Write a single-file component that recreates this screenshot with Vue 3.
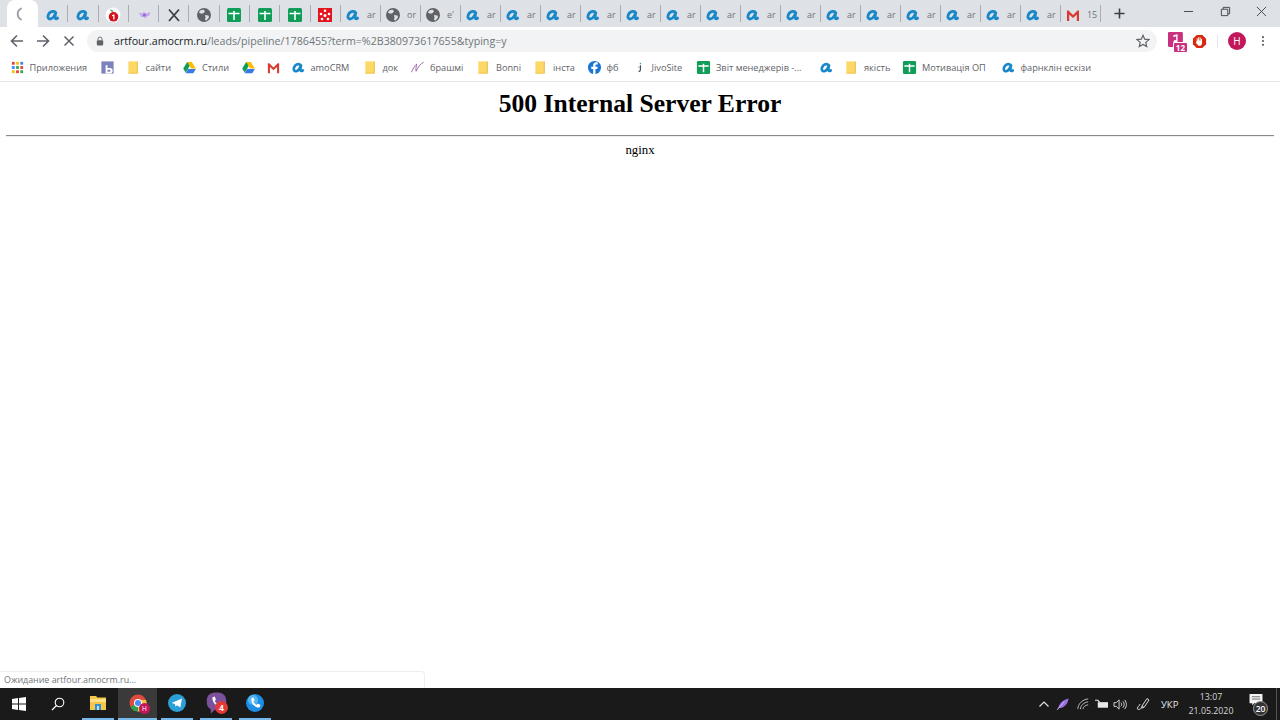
<script setup>
const narrow = ['a', 'a', 'tomato', 'purple', 'x', 'globe', 'sheet', 'sheet', 'sheet', 'dots']
const wide = [
  { icon: 'a', text: 'ar' },
  { icon: 'globe', text: 'or' },
  { icon: 'globe', text: "e'" },
  ...Array.from({ length: 15 }, () => ({ icon: 'a', text: 'ar' })),
  { icon: 'gmail', text: '15' }
]
const bookmarks = [
  { icon: 'apps', text: 'Приложения', w: 90.5 },
  { icon: 'bk', text: '', w: 25.5 },
  { icon: 'folder', text: 'сайти', w: 56.5 },
  { icon: 'drive', text: 'Стили', w: 58.5 },
  { icon: 'drive', text: '', w: 25.5 },
  { icon: 'gmail', text: '', w: 24.5 },
  { icon: 'a', text: 'amoCRM', w: 72 },
  { icon: 'folder', text: 'док', w: 47.5 },
  { icon: 'brush', text: 'брашмі', w: 66 },
  { icon: 'folder', text: 'Bonni', w: 57 },
  { icon: 'folder', text: 'інста', w: 53.5 },
  { icon: 'fb', text: 'фб', w: 45 },
  { icon: 'jivo', text: 'JivoSite', w: 64.5 },
  { icon: 'sheet', text: 'Звіт менеджерів -...', w: 122.5 },
  { icon: 'a', text: '', w: 25.5 },
  { icon: 'folder', text: 'якість', w: 58 },
  { icon: 'sheet', text: 'Мотивація ОП', w: 98.5 },
  { icon: 'a', text: 'фарнклін ескізи', w: 100 }
]
</script>

<template>
  <div class="screen">
    <svg class="defs" aria-hidden="true">
      <symbol id="a" viewBox="0 0 16 16">
        <path d="M10.800 6C10 4.400 7.600 3.900 5.700 5 3.300 6.400 2.300 9.400 3.300 11c1 1.600 3.300 1.100 4.900-.6 1.200-1.300 2-3.400 2.600-5.600-.4 2.200-.9 4.500-.7 6 .2 1.200 1.300 1.300 2.500.3" fill="none" stroke="#1a87c9" stroke-width="2.800" stroke-linecap="round" />
      </symbol>
      <symbol id="globe" viewBox="0 0 16 16">
        <circle cx="8" cy="8" r="7" fill="#5f6368" />
        <path d="M4 3.500 7.500 2.500 9 4.500 7 6.500 4.500 6.500 3 5.500ZM9 8l3.500.5L13 10.500 10.500 13.500 9 13 9.500 10.500Z" fill="#dfe1e5" />
      </symbol>
      <symbol id="sheet" viewBox="0 0 16 16">
        <rect x="1" y="1" width="14" height="14" rx="1.500" fill="#0f9d58" />
        <path d="M7.200 4h1.600v1.700h4.700v1.600H8.800V13H7.200V7.300H2.500V5.700h4.700Z" fill="#fff" />
      </symbol>
      <symbol id="tomato" viewBox="0 0 16 16">
        <circle cx="8" cy="8" r="7.500" fill="#fff" />
        <circle cx="8.500" cy="9.800" r="4.800" fill="#d3121c" />
        <path d="M7 5C6 3.500 5 3 4.500 3 6 2.500 7.500 3 8.500 4.500Z" fill="#3f9b3f" />
        <path d="M8.200 7.500h1.300v5H8.200V8.700l-1.200.5V8.200Z" fill="#fff" />
      </symbol>
      <symbol id="purple" viewBox="0 0 16 16">
        <path d="M2 5.500 6 6.500 8 5l2 1.500 4.500-1.500-1.500 4-2.500.5-1 2-1.500-1.500L5 10 4.500 8Z" fill="#c6a6ec" />
        <circle cx="8.500" cy="8" r="1.600" fill="#8f6bd2" />
      </symbol>
      <symbol id="x" viewBox="0 0 16 16">
        <path d="M3 2.500 13 14M13 2.500 3 14" stroke="#3c4043" stroke-width="1.800" fill="none" />
      </symbol>
      <symbol id="dots" viewBox="0 0 16 16">
        <rect x="1" y="1" width="14" height="14" fill="#e2151f" />
        <g fill="#fff"><circle cx="8" cy="3.800" r="1.300" /><circle cx="4" cy="7" r="1.300" /><circle cx="12" cy="7" r="1.300" /><circle cx="8" cy="8.500" r="1.500" /><circle cx="5" cy="12" r="1.300" /><circle cx="11" cy="12" r="1.300" /></g>
      </symbol>
      <symbol id="gmail" viewBox="0 0 16 16">
        <path d="M2 14V3.500h1.500L8 8l4.500-4.500H14V14h-2.200V7.500L8 11 4.200 7.500V14Z" fill="#d93a30" />
      </symbol>
      <symbol id="apps" viewBox="0 0 16 16">
        <g transform="translate(2 2)">
          <rect x="0" y="0" width="3" height="3" fill="#ea4335" /><rect x="4.500" y="0" width="3" height="3" fill="#fbbc04" /><rect x="9" y="0" width="3" height="3" fill="#4285f4" />
          <rect x="0" y="4.500" width="3" height="3" fill="#4285f4" /><rect x="4.500" y="4.500" width="3" height="3" fill="#34a853" /><rect x="9" y="4.500" width="3" height="3" fill="#ea4335" />
          <rect x="0" y="9" width="3" height="3" fill="#fbbc04" /><rect x="4.500" y="9" width="3" height="3" fill="#ea4335" /><rect x="9" y="9" width="3" height="3" fill="#34a853" />
        </g>
      </symbol>
      <symbol id="bk" viewBox="0 0 16 16">
        <rect x="1.500" y="1.500" width="13" height="13" fill="#7d82bd" />
        <path d="M6 5.500h2v3h2.500a2.800 2.800 0 0 1 0 6H6Zm2 5v2h2.200a1 1 0 0 0 0-2Z" fill="#fff" />
      </symbol>
      <symbol id="folder" viewBox="0 0 16 16">
        <path d="M2.500 1.500h10v13h-10Z" fill="#fdd867" />
        <path d="M11.500 1.500h1v13h-10v-1h9Z" fill="#e9bd4e" />
      </symbol>
      <symbol id="drive" viewBox="0 0 16 16">
        <path d="M5.500 2h5L6.800 8.800 4 13.500 1.300 9Z" fill="#0f9d58" />
        <path d="M5.500 2h5l4.300 7H9.700Z" fill="#fbbc04" />
        <path d="M4 14 6.500 9.500h8.300L12 14Z" fill="#3b78e7" />
      </symbol>
      <symbol id="brush" viewBox="0 0 16 16">
        <path d="M1.500 13C4 8 5.500 5.500 7 4.500 6.500 8 6 10 6.500 12 8.500 7.500 11 4 14.500 2.500" fill="none" stroke="#9a5aa8" stroke-width="1" />
      </symbol>
      <symbol id="fb" viewBox="0 0 16 16">
        <circle cx="8" cy="8" r="7" fill="#1877d2" />
        <path d="M9 15V9.500h2l.4-2.300H9V6c0-.8.3-1.300 1.300-1.300h1.100V2.600C11 2.500 10.400 2.400 9.800 2.400 7.900 2.400 6.600 3.600 6.600 5.700v1.500H4.500v2.300h2.100V15Z" fill="#fff" />
      </symbol>
      <symbol id="jivo" viewBox="0 0 16 16">
        <path d="M9 5.500v5c0 1.200-.7 1.800-2 2" fill="none" stroke="#41505e" stroke-width="1.300" />
        <circle cx="9" cy="3.800" r=".8" fill="#41a95e" />
        <circle cx="7.300" cy="7.500" r=".6" fill="#41505e" />
      </symbol>
    </svg>

    <header class="tabstrip">
      <div class="tab active">
        <svg class="tab-icon" viewBox="0 0 16 16"><path d="M11 2.500A6.200 6.200 0 0 0 11 13.500" fill="none" stroke="#9aa0a6" stroke-width="1.800" stroke-linecap="round" /></svg>
      </div>
      <div v-for="(icon, i) in narrow" :key="'n' + i" class="tab narrow">
        <svg class="tab-icon"><use :href="'#' + icon" /></svg>
      </div>
      <div v-for="(t, i) in wide" :key="'w' + i" class="tab wide">
        <svg class="tab-icon"><use :href="'#' + t.icon" /></svg>
        <span class="tab-text">{{ t.text }}</span>
      </div>
      <svg class="new-tab" viewBox="0 0 12 12"><path d="M6 .5v11M.5 6h11" stroke="#3c4043" stroke-width="1.700" /></svg>
      <div class="window-controls">
        <svg viewBox="0 0 12 12"><path d="M1 6h10" stroke="#3c4043" stroke-width="1" /></svg>
        <svg viewBox="0 0 12 12"><path d="M1.500 3.500h7v7h-7ZM3.500 3.500v-2h7v7h-2" fill="none" stroke="#3c4043" stroke-width="1" /></svg>
        <svg viewBox="0 0 12 12"><path d="M1 1l10 10M11 1 1 11" stroke="#3c4043" stroke-width="1" /></svg>
      </div>
    </header>

    <nav class="toolbar">
      <svg class="nav-icon" viewBox="0 0 14 14"><path d="M13 7H2M7 1.500 1.500 7 7 12.500" fill="none" stroke="#5f6368" stroke-width="1.600" /></svg>
      <svg class="nav-icon" viewBox="0 0 14 14"><path d="M1 7h11M7 1.500 12.500 7 7 12.500" fill="none" stroke="#5f6368" stroke-width="1.600" /></svg>
      <svg class="nav-icon" viewBox="0 0 14 14"><path d="M2.500 2.500l9 9M11.500 2.500l-9 9" fill="none" stroke="#5f6368" stroke-width="1.500" /></svg>
      <div class="omnibox">
        <svg class="lock" viewBox="0 0 10 12"><path d="M2.500 5V3.500a2.500 2.500 0 0 1 5 0V5" fill="none" stroke="#5f6368" stroke-width="1.100" /><rect x="1" y="5" width="8" height="6.500" rx="1" fill="#5f6368" /></svg>
        <span class="url"><span class="host">artfour.amocrm.ru</span>/leads/pipeline/1786455?term=%2B380973617655&amp;typing=y</span>
        <svg class="star" viewBox="0 0 14 14"><path d="M7 1.300 8.700 5.200 13 5.600 9.800 8.400 10.700 12.600 7 10.400 3.300 12.600 4.200 8.400 1 5.600 5.300 5.200Z" fill="none" stroke="#5f6368" stroke-width="1.200" /></svg>
      </div>
      <div class="extensions">
        <div class="ext-pink">
          <svg viewBox="0 0 16 16"><rect x="0" y="0" width="14" height="14" rx="1" fill="#c9307f" /><path d="M9 2v7.500a2 2 0 1 1-1.300-1.800V4L5 4.800V3Z" fill="#fff" /></svg>
          <span class="ext-badge">12</span>
        </div>
        <svg class="ext-stop" viewBox="0 0 16 16"><path d="M5 1h6l4 4v6l-4 4H5l-4-4V5Z" fill="#d8280f" /><path d="M5 7V4.500h1V7h.6V3.500h1V7h.6V3.800h1V7h.5V5h1v5.500L9.500 12.500H7L4.200 9.500Z" fill="#fff" /></svg>
        <span class="ext-sep"></span>
        <span class="avatar">Н</span>
        <svg class="kebab" viewBox="0 0 4 14"><circle cx="2" cy="2.500" r="1.300" fill="#5f6368" /><circle cx="2" cy="7" r="1.300" fill="#5f6368" /><circle cx="2" cy="11.500" r="1.300" fill="#5f6368" /></svg>
      </div>
    </nav>

    <div class="bookmarks">
      <div v-for="(b, i) in bookmarks" :key="i" class="bookmark" :style="{ width: b.w + 'px' }">
        <svg class="bm-icon"><use :href="'#' + b.icon" /></svg>
        <span v-if="b.text" class="bm-text">{{ b.text }}</span>
      </div>
    </div>

    <main class="page">
      <h1>500 Internal Server Error</h1>
      <hr />
      <p>nginx</p>
      <div class="status">Ожидание artfour.amocrm.ru...</div>
    </main>

    <footer class="taskbar">
      <div class="task-left">
        <div class="tb start">
          <svg viewBox="0 0 14 14"><path d="M0 2 6 1.100V6.500H0ZM7 1 14 0V6.500H7ZM0 7.500H6V12.900L0 12ZM7 7.500H14V14L7 13Z" fill="#fff" /></svg>
        </div>
        <div class="tb search">
          <svg viewBox="0 0 14 14"><circle cx="8.500" cy="5.500" r="4.300" fill="none" stroke="#fff" stroke-width="1.100" /><path d="M5.500 8.500 1 13" stroke="#fff" stroke-width="1.300" /></svg>
        </div>
        <div class="tb app explorer">
          <svg viewBox="0 0 18 16"><path d="M1 1h6l1.500 1.500H17V15H1Z" fill="#f6c746" /><rect x="1" y="4" width="16" height="3" fill="#fbe08a" /><rect x="6" y="9" width="6" height="6" fill="#2f8fd8" /><rect x="8" y="11" width="2" height="4" fill="#bfe0f6" /></svg>
        </div>
        <div class="tb app chrome current">
          <svg viewBox="0 0 18 18"><circle cx="9" cy="9" r="8.500" fill="#dd4b3e" /><path d="M9 9 1.500 13A8.500 8.500 0 0 0 9 17.500Z" fill="#2f9e4f" /><path d="M9 9V17.500A8.500 8.500 0 0 0 17 6H9Z" fill="#f5c33b" /><circle cx="9" cy="9" r="4" fill="#fff" /><circle cx="9" cy="9" r="3" fill="#4a8af4" /></svg>
          <span class="chrome-badge">Н</span>
        </div>
        <div class="tb app">
          <svg viewBox="0 0 18 18"><circle cx="9" cy="9" r="9" fill="#2a9fd8" /><path d="M3.500 9 14 4.500 12.300 13.500 9 11.300 7.500 12.800 7 10Z" fill="#fff" /></svg>
        </div>
        <div class="tb app viber">
          <svg viewBox="0 0 18 20"><path d="M9 .5c5 0 8.500 2 8.500 7.500S14 15.500 9 15.500H7.500L4 19v-4C1.500 13.500.5 11.500.5 8 .5 2.500 4 .5 9 .5Z" fill="#7b519d" /><path d="M5.500 4.500 7.500 4 8.500 6.500 7.500 7.500C8 9 9 10 10.500 10.500L11.500 9.500 14 10.500 13.500 12.500C9 13 5 9 5.500 4.500Z" fill="#fff" /></svg>
          <span class="viber-badge">4</span>
        </div>
        <div class="tb app">
          <svg viewBox="0 0 18 18"><circle cx="9" cy="9" r="9" fill="#1d8ee6" /><circle cx="7" cy="6" r="5" fill="#7fd0f7" opacity=".6" /><path d="M5.500 4 7.500 3.500 8.500 6.500 7.300 7.500C8 9 9 10.200 10.500 10.700L11.700 9.500 14.500 11 13.500 13.500C9 14 4.500 9 5.500 4Z" fill="#fff" /></svg>
        </div>
      </div>
      <div class="tray">
        <svg class="t-chevron" viewBox="0 0 10 6"><path d="M.5 5.500 5 1l4.500 4.500" fill="none" stroke="#e8e8e8" stroke-width="1.100" /></svg>
        <svg class="t-feather" viewBox="0 0 14 14"><path d="M1 13 3 9C5 4 9 1.500 13.500.5 13 5 10.500 9 6 10.500L3 11Z" fill="#9a6fe0" /><path d="M1 13 9 4" stroke="#e8dcff" stroke-width=".7" /></svg>
        <svg class="t-wifi" viewBox="0 0 14 14"><path d="M1 13C1 7 6 2 13 1M4 13c0-4 4-8 9-8.500M7 13c0-2.500 3-5 6-5" fill="none" stroke="#cfcfcf" stroke-width="1" /></svg>
        <svg class="t-power" viewBox="0 0 14 10"><rect x="3" y="3" width="11" height="6" fill="#e8e8e8" /><path d="M0 1h3l2 2" fill="none" stroke="#e8e8e8" stroke-width="1.200" /></svg>
        <svg class="t-vol" viewBox="0 0 14 14"><path d="M.5 5H3L6 2v10L3 9H.5Z" fill="none" stroke="#e0e0e0" stroke-width="1" /><path d="M8 5c1 1 1 3 0 4M10 3.500c2 2 2 5 0 7M12 2c2.500 3 2.500 7 0 10" fill="none" stroke="#e0e0e0" stroke-width="1" /></svg>
        <svg class="t-pen" viewBox="0 0 14 14"><path d="M6 9 11 1.500l2 1.500L8 10.500ZM6 9 5.500 11 8 10.500M5.500 11C3 13 1 13 1.500 11 2 9 4 8.500 4 7" fill="none" stroke="#dcdcdc" stroke-width="1" /></svg>
        <span class="t-lang">УКР</span>
        <div class="t-clock"><span>13:07</span><span>21.05.2020</span></div>
        <div class="t-notify">
          <svg viewBox="0 0 14 13"><path d="M0 0h14v10H5L3 12.500V10H0Z" fill="#f4f4f4" /><path d="M2.500 3h9M2.500 5.500h9" stroke="#444" stroke-width=".8" /></svg>
          <span class="t-count">20</span>
        </div>
      </div>
    </footer>
  </div>
</template>

<style scoped>
.screen {
  width: 1280px;
  height: 720px;
  display: flex;
  flex-direction: column;
  overflow: hidden;
  background: #fff;
  font-family: "Open Sans", "Noto Sans", sans-serif;
}
.defs { display: none; }

.tabstrip {
  height: 27px;
  flex: none;
  background: #dee1e6;
  display: flex;
  align-items: stretch;
}
.tab {
  display: flex;
  align-items: center;
  box-sizing: border-box;
  padding-top: 2px;
  position: relative;
}
.tab.narrow::after,
.tab.wide::after {
  content: "";
  position: absolute;
  right: 0;
  top: 5px;
  width: 1px;
  height: 17px;
  background: #a9acb1;
}
.tab.active {
  width: 31px;
  margin-left: 7px;
  padding-left: 3px;
  padding-top: 0;
  background: #fff;
  border-radius: 8px 8px 0 0;
}
.tab.narrow { width: 30.300px; justify-content: center; padding-right: 1px; }
.tab.wide { width: 40px; padding-left: 4px; }
.tab-icon { width: 16px; height: 16px; flex: none; }
.tab-text {
  font-size: 9px;
  color: #6f7377;
  margin-left: 6px;
  white-space: nowrap;
}
.new-tab { width: 11px; height: 11px; margin: 8px 0 0 13px; flex: none; }
.window-controls {
  margin-left: auto;
  display: flex;
  gap: 25.500px;
  padding: 6px 13px 0 0;
  align-items: flex-start;
}
.window-controls svg { width: 11px; height: 11px; }

.toolbar {
  height: 27px;
  flex: none;
  box-sizing: border-box;
  padding-top: 1px;
  background: #fff;
  display: flex;
  align-items: center;
  padding-left: 10px;
  gap: 12px;
}
.nav-icon { width: 14px; height: 14px; flex: none; }
.omnibox {
  width: 1070px;
  height: 22px;
  margin-left: -1px;
  background: #f1f3f4;
  border-radius: 11px;
  display: flex;
  align-items: center;
  box-sizing: border-box;
  padding: 0 7px 0 9px;
  flex: none;
}
.lock { width: 8px; height: 10px; flex: none; }
.url {
  margin-left: 10px;
  font-size: 10.670px;
  color: #70757a;
  white-space: nowrap;
}
.host { color: #202124; }
.star { width: 14px; height: 14px; margin-left: auto; }
.extensions {
  flex: none;
  display: flex;
  align-items: center;
  margin-left: -1px;
}
.ext-pink { position: relative; width: 18px; height: 19px; }
.ext-pink svg { width: 17px; height: 17px; display: block; }
.ext-badge {
  position: absolute;
  right: -2px;
  bottom: -2px;
  background: #c9307f;
  color: #fff;
  font-size: 8px;
  font-weight: 700;
  line-height: 9px;
  padding: 0 2px;
  border: 1px solid #fff;
  border-radius: 2px;
}
.ext-stop { width: 15px; height: 15px; margin-left: 6px; }
.ext-sep { width: 1px; height: 13px; background: #e5e7ea; margin-left: 10px; }
.avatar {
  width: 18px;
  height: 18px;
  border-radius: 50%;
  background: #c2185b;
  color: #fff;
  font-size: 10px;
  line-height: 18px;
  text-align: center;
  margin-left: 10px;
}
.kebab { width: 4px; height: 12px; margin-left: 15px; }

.bookmarks {
  height: 28px;
  flex: none;
  box-sizing: border-box;
  border-bottom: 1px solid #e2e3e5;
  display: flex;
  align-items: center;
  padding-left: 9.500px;
  background: #fff;
}
.bookmark { display: flex; align-items: center; gap: 5px; flex: none; box-sizing: border-box; }
.bm-icon { width: 15px; height: 15px; flex: none; }
.bm-text { font-size: 9.200px; color: #5f6368; white-space: nowrap; }

.page {
  flex: 1;
  position: relative;
  background: #fff;
  color: #000;
  font-family: "Liberation Serif", serif;
  font-size: 12.800px;
  padding: 0 6.400px;
  min-height: 0;
}
.page h1 {
  margin: 0;
  padding-top: 7px;
  font-size: 25.600px;
  line-height: 29px;
  text-align: center;
  font-weight: 700;
}
.page hr {
  margin: 17px 0 0;
  border: none;
  border-top: 1px solid #8a8a8a;
  border-bottom: 1px solid #eee;
}
.page p {
  margin: 6px 0 0;
  text-align: center;
  line-height: 15px;
}
.status {
  position: absolute;
  left: 0;
  bottom: 0;
  width: 425px;
  height: 17px;
  box-sizing: border-box;
  border: 1px solid #eceef0;
  border-bottom: none;
  border-left: none;
  border-radius: 0 4px 0 0;
  background: #fff;
  padding-left: 4px;
  font-family: "Open Sans", sans-serif;
  font-size: 8.900px;
  line-height: 16px;
  color: #70757a;
}

.taskbar {
  height: 32px;
  flex: none;
  background: #1a1a1a;
  display: flex;
  justify-content: space-between;
  color: #e8e8e8;
}
.task-left { display: flex; align-items: stretch; }
.tb { display: flex; align-items: center; justify-content: center; position: relative; box-sizing: border-box; flex: none; }
.tb.start { width: 38px; }
.tb.start svg { width: 14px; height: 14px; }
.tb.search { width: 40px; }
.tb.search svg { width: 14px; height: 14px; }
.tb.app {
  width: 32px;
  margin-right: 7px;
  border-bottom: 2px solid #76b9ed;
}
.tb.app svg { width: 18px; height: 18px; }
.tb.app.viber svg { width: 21px; height: 23px; }
.tb.explorer { margin-left: 4px; margin-right: 4px; }
.tb.current { width: 39px; margin-right: 4px; background: #3a3a3a; }
.chrome-badge {
  position: absolute;
  left: 21px;
  top: 15px;
  width: 11px;
  height: 11px;
  border-radius: 50%;
  background: #c2185b;
  color: #fff;
  font-size: 6.500px;
  line-height: 11px;
  text-align: center;
}
.viber-badge {
  position: absolute;
  left: 15px;
  top: 13px;
  width: 13px;
  height: 13px;
  border-radius: 50%;
  background: #e53935;
  color: #fff;
  font-size: 8.500px;
  font-weight: 700;
  line-height: 13px;
  text-align: center;
}
.tray { display: flex; align-items: center; padding-right: 9px; margin-right: 3px; border-right: 1px solid #555; }
.t-chevron { width: 10px; height: 6px; }
.t-feather { width: 13px; height: 13px; margin-left: 7px; }
.t-wifi { width: 12px; height: 12px; margin-left: 8px; }
.t-power { width: 13px; height: 10px; margin-left: 6px; }
.t-vol { width: 14px; height: 13px; margin-left: 5px; }
.t-pen { width: 14px; height: 14px; margin-left: 9px; }
.t-lang { font-size: 9.500px; margin-left: 11px; width: 18px; }
.t-clock {
  display: flex;
  flex-direction: column;
  align-items: center;
  width: 52px;
  margin-left: 6px;
  font-size: 8.800px;
  line-height: 14px;
  color: #d8d8d8;
}
.t-notify { position: relative; width: 18px; height: 22px; margin-left: 12px; }
.t-notify svg { width: 14px; height: 12px; display: block; margin-top: 1px; }
.t-count {
  position: absolute;
  right: -1px;
  bottom: -1px;
  width: 15px;
  height: 15px;
  border-radius: 50%;
  border: 1px solid #999;
  background: #333;
  font-size: 8.500px;
  font-weight: 600;
  line-height: 13px;
  text-align: center;
  color: #fff;
  box-sizing: border-box;
}
</style>
